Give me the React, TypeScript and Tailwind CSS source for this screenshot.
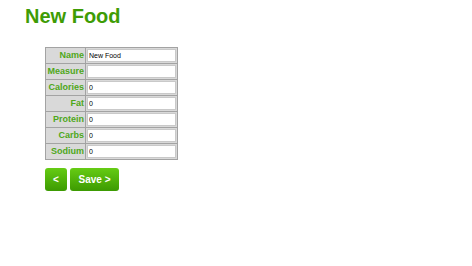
const rows = [
  { label: 'Name', value: 'New Food' },
  { label: 'Measure', value: '' },
  { label: 'Calories', value: '0' },
  { label: 'Fat', value: '0' },
  { label: 'Protein', value: '0' },
  { label: 'Carbs', value: '0' },
  { label: 'Sodium', value: '0' },
];

export default function App() {
  return (
    <div className="w-[472px] h-[266px] bg-white font-['Liberation_Sans',Arial,sans-serif]">
      <h1 className="ml-[25px] pt-[4px] text-[20px] leading-[24px] font-bold text-[#3e9c05]">New Food</h1>

      {/* Form table */}
      <div className="ml-[45px] mt-[19px] w-[133px] grid grid-cols-[39px_1fr] gap-px border border-[#a3a3a3] bg-[#a3a3a3]">
        {rows.map((r) => (
          <div key={r.label} className="contents">
            <div className="h-[15px] bg-[#d9d9d9] flex items-center justify-end pr-[1px] text-[9px] font-bold text-[#4ea71a] leading-none">
              {r.label}
            </div>
            <div className="h-[15px] bg-[#d9d9d9] flex items-center px-[1px]">
              <input
                readOnly
                value={r.value}
                className="w-full h-[13px] bg-white border border-[#c9c9c9] px-[1px] text-[7px] text-black leading-none outline-none"
              />
            </div>
          </div>
        ))}
      </div>

      {/* Buttons */}
      <div className="ml-[45px] mt-[8px] flex gap-[3px]">
        <button className="w-[22px] h-[23px] rounded-[3px] bg-gradient-to-b from-[#66cc14] to-[#3c9a02] text-white text-[10px] font-bold">
          &lt;
        </button>
        <button className="w-[49px] h-[23px] rounded-[3px] bg-gradient-to-b from-[#66cc14] to-[#3c9a02] text-white text-[10px] font-bold">
          Save &gt;
        </button>
      </div>
    </div>
  );
}
